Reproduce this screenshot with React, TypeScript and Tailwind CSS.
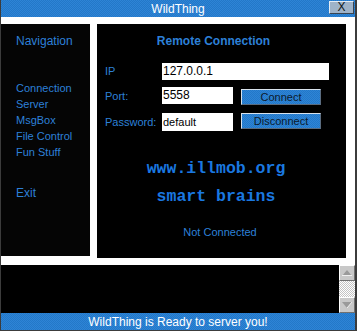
import React from "react";

const blue =
  "bg-[#2a7fd0] bg-[repeating-conic-gradient(#2e84d6_0%_25%,#2378c8_0%_50%)] bg-[length:2px_2px]";

export default function App() {
  const font = { fontFamily: '"Liberation Sans", Arial, sans-serif' };
  return (
    <div
      className="w-[357px] h-[331px] bg-white flex flex-col border-r-2 border-b border-l border-[#3c3c3c] overflow-hidden"
      style={font}
    >
      {/* Title bar */}
      <div className={`relative h-[17px] shrink-0 ${blue} flex items-center justify-center`}>
        <span className="text-white text-[12px] leading-[14px]">WildThing</span>
        <div className="absolute right-[1px] top-[1px] w-[25px] h-[13px] bg-[#9fb3c8] border border-t-[#e4ecf4] border-l-[#e4ecf4] border-b-[#3a4450] border-r-[#3a4450] flex items-center justify-center text-[12px] leading-[11px] text-[#101820]">
          X
        </div>
      </div>

      {/* Middle */}
      <div className="flex pt-[7px] gap-[7px] h-[248px] shrink-0">
        {/* Left nav */}
        <div className="w-[89px] h-[232px] bg-[#050505] flex flex-col pl-[15px] pt-[10px] text-[#2d80d8]">
          <div className="text-[12px] leading-[14px]">Navigation</div>
          <div className="mt-[32px] flex flex-col text-[11px] leading-[16px]">
            <span>Connection</span>
            <span>Server</span>
            <span>MsgBox</span>
            <span>File Control</span>
            <span>Fun Stuff</span>
          </div>
          <div className="mt-[25px] text-[12px] leading-[16px]">Exit</div>
        </div>

        {/* Main panel */}
        <div className="w-[249px] h-[234px] bg-black flex flex-col pt-[10px]">
          <div className="text-center pr-[16px] font-bold text-[12px] leading-[14px] text-[#2d80d8]">
            Remote Connection
          </div>
          <div className="mt-[15px] flex flex-col pl-[8px] text-[11px] text-[#2d80d8]">
            <div className="flex items-center h-[17px]">
              <span className="w-[57px]">IP</span>
              <div className="w-[167px] h-[17px] bg-white text-black text-[12px] leading-[17px] pl-[1px]">
                127.0.0.1
              </div>
            </div>
            <div className="flex items-start h-[18px] mt-[7px]">
              <span className="w-[57px] leading-[18px]">Port:</span>
              <div className="w-[71px] h-[17px] bg-white text-black text-[12px] leading-[17px] pl-[1px]">
                5558
              </div>
              <div
                className={`ml-[8px] mt-[2px] w-[80px] h-[16px] ${blue} border border-t-[#d8e2ec] border-l-[#d8e2ec] border-b-[#5a6c80] border-r-[#5a6c80] flex items-center justify-center text-[11px] text-[#0c1a2c] leading-[14px]`}
              >
                Connect
              </div>
            </div>
            <div className="flex items-start h-[18px] mt-[8px]">
              <span className="w-[57px] leading-[18px]">Password:</span>
              <div className="w-[71px] h-[18px] bg-white text-black leading-[18px] pl-[1px]">
                default
              </div>
              <div
                className={`ml-[8px] w-[80px] h-[16px] ${blue} border border-t-[#d8e2ec] border-l-[#d8e2ec] border-b-[#5a6c80] border-r-[#5a6c80] flex items-center justify-center text-[11px] text-[#0c1a2c] leading-[14px]`}
              >
                Disconnect
              </div>
            </div>
          </div>
          <div
            className="mt-[24px] pr-[11px] flex flex-col items-center font-bold text-[16.5px] leading-[28px] text-[#1a78e0]"
            style={{ fontFamily: '"Liberation Mono", "Courier New", monospace' }}
          >
            <span>www.illmob.org</span>
            <span>smart brains</span>
          </div>
          <div className="mt-[14px] pr-[3px] text-center text-[11px] leading-[14px] text-[#2d80d8]">
            Not Connected
          </div>
        </div>
      </div>

      {/* Bottom log */}
      <div className="flex h-[48px] shrink-0">
        <div className="flex-1 bg-black" />
        <div className="w-[16px] flex flex-col">
          <div className="h-[16px] bg-[#c8c8c8] border border-t-white border-l-white border-b-[#707070] border-r-[#707070] flex items-center justify-center">
            <svg width="10" height="6" viewBox="0 0 10 6">
              <polygon points="5,0 10,6 0,6" fill="#9a9a9a" />
              <line x1="0" y1="5.5" x2="10" y2="5.5" stroke="#f0f0f0" strokeWidth="1" />
            </svg>
          </div>
          <div className="flex-1 bg-[#e8e8e8] bg-[repeating-conic-gradient(#ffffff_0%_25%,#c4c4c4_0%_50%)] bg-[length:2px_2px]" />
          <div className="h-[16px] bg-[#c8c8c8] border border-t-white border-l-white border-b-[#707070] border-r-[#707070] flex items-center justify-center">
            <svg width="10" height="6" viewBox="0 0 10 6">
              <polygon points="0,0 10,0 5,6" fill="#9a9a9a" />
              <line x1="5" y1="6" x2="10" y2="0" stroke="#f0f0f0" strokeWidth="1" />
            </svg>
          </div>
        </div>
      </div>

      {/* Status bar */}
      <div className={`h-[17px] shrink-0 ${blue} flex items-center justify-center`}>
        <span className="text-white text-[12px] leading-[14px]">WildThing is Ready to server you!</span>
      </div>
    </div>
  );
}
